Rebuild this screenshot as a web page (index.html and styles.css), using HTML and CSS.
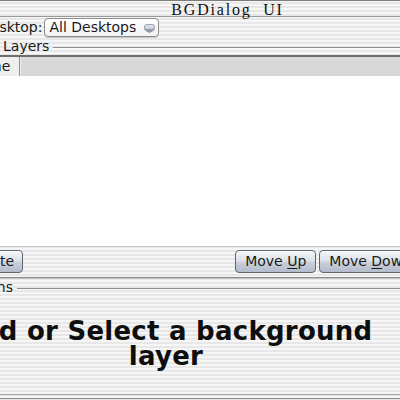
FILE: index.html
```html
<!DOCTYPE html>
<html>
<head>
<meta charset="utf-8">
<link rel="stylesheet" href="styles.css">
</head>
<body>
<div class="window">
  <div class="titlebar"><span class="title">BGDialog  UI</span></div>
  <div class="desk-row">
    <span class="label">Desktop:</span>
    <div class="popup">
      <span class="popup-text">All Desktops</span>
      <svg class="popup-arrow" width="11" height="9" viewBox="0 0 11 9">
        <defs>
          <linearGradient id="pg" x1="0" y1="0" x2="0" y2="1">
            <stop offset="0" stop-color="#e4e7ec"/>
            <stop offset="0.45" stop-color="#c9ced8"/>
            <stop offset="0.5" stop-color="#9ca5b6"/>
            <stop offset="1" stop-color="#8590a3"/>
          </linearGradient>
        </defs>
        <path d="M0.5 2.5 Q0.5 0.5 2.5 0.5 H8.5 Q10.5 0.5 10.5 2.5 V4.5 Q10.5 6 8.5 7 L5.5 8.5 L2.5 7 Q0.5 6 0.5 4.5 Z" fill="url(#pg)" stroke="#8a92a0" stroke-width="0.8"/>
        <path d="M1.5 4.2 H9.5" stroke="#eef0f4" stroke-width="0.8"/>
      </svg>
    </div>
  </div>
  <div class="group-row layers-row">
    <span class="group-label">Layers</span>
    <span class="group-line"></span>
  </div>
  <div class="list">
    <div class="list-header">
      <div class="col-cell">Name</div>
      <div class="col-rest"></div>
    </div>
    <div class="list-body"></div>
  </div>
  <div class="btn-row">
    <button class="btn btn-delete"><u>D</u>elete</button>
    <button class="btn btn-up">Move <u>U</u>p</button>
    <button class="btn btn-down">Move <u>D</u>own</button>
  </div>
  <div class="sep"></div>
  <div class="group-row options-row">
    <span class="group-label">Options</span>
    <span class="group-line"></span>
  </div>
  <div class="message">Add or Select a background layer</div>
  <div class="bottom-lines"></div>
</div>
</body>
</html>
```
FILE: styles.css
```css
html, body {
  margin: 0;
  padding: 0;
}
body {
  width: 400px;
  height: 400px;
  overflow: hidden;
  background: repeating-linear-gradient(to bottom, #f6f6f6 0px, #f6f6f6 2px, #e7e7e7 2px, #e7e7e7 4px);
  font-family: "DejaVu Sans", sans-serif;
  font-size: 14px;
  color: #1a1a1a;
}
.window {
  width: 575px;
  margin-left: -60px;
  border-top: 1px solid #7c7c7c;
}
.titlebar {
  height: 14px;
  padding-top: 1px;
  line-height: 16px;
  text-align: center;
  border-bottom: 1px solid #9a9a9a;
}
.title {
  font-family: "Liberation Serif", serif;
  font-size: 16px;
  letter-spacing: 1.8px;
  white-space: pre;
  color: #111;
}
.desk-row {
  display: flex;
  align-items: center;
  margin-top: 1px;
  padding-left: 40px;
  height: 19px;
}
.label {
  line-height: 17px;
}
.popup {
  margin-left: 2px;
  width: 113px;
  height: 17px;
  border: 1px solid #8c8c8c;
  border-radius: 4px;
  background: linear-gradient(#ffffff, #f3f3f3);
  box-shadow: 0 1px 0 #c8c8c8;
  display: flex;
  align-items: center;
  line-height: 17px;
}
.popup-text {
  padding-left: 4px;
  flex: 1;
}
.popup-arrow {
  margin-right: 3px;
  margin-top: 1px;
}
.group-row {
  display: flex;
  align-items: center;
  line-height: 17px;
}
.layers-row {
  margin-top: 1px;
  height: 17px;
  padding-left: 63px;
}
.options-row {
  height: 17px;
  padding-left: 19px;
}
.group-line {
  flex: 1;
  margin-left: 4px;
  margin-top: 2px;
  height: 1px;
  background: #8e8e8e;
  border-bottom: 1px solid #fafafa;
}
.list {
  border-top: 2px solid #6e6e6e;
  border-bottom: 1px solid #c9c9c9;
}
.list-header {
  display: flex;
  height: 19px;
  background: #d8d8d8;
  line-height: 19px;
}
.col-cell {
  width: 50px;
  padding-left: 29px;
  background: #efefef;
  border-right: 1px solid #8f8f8f;
  white-space: nowrap;
  overflow: hidden;
}
.col-rest {
  flex: 1;
  border-left: 1px solid #ececec;
}
.list-body {
  height: 170px;
  background: #ffffff;
}
.btn-row {
  display: flex;
  margin-top: 3px;
  padding-left: 19px;
  padding-right: 94px;
}
.btn {
  height: 23px;
  padding: 0 8px;
  border: 1px solid #5f6670;
  border-radius: 4px;
  background: linear-gradient(#f4f6f9 0%, #dde2ea 45%, #c9d0db 55%, #b3bccb 100%);
  box-shadow: inset 0 1px 0 #ffffff;
  font-family: "DejaVu Sans", sans-serif;
  font-size: 14px;
  line-height: 21px;
  color: #1a1a1a;
  white-space: nowrap;
}
.btn u {
  text-decoration-thickness: 1px;
  text-underline-offset: 2px;
}
.btn-up {
  margin-left: auto;
  padding: 0 9px;
}
.btn-down {
  margin-left: 3px;
  padding: 0 9px;
}
.sep {
  margin-top: 4px;
  height: 1px;
  background: #8a8a8a;
  border-bottom: 1px solid #c4c4c4;
}
.message {
  width: 440px;
  margin-left: 6px;
  margin-top: 23px;
  text-align: center;
  font-weight: bold;
  font-size: 26px;
  line-height: 25px;
  letter-spacing: 0.25px;
  color: #0e0e0e;
}
.bottom-lines {
  margin-top: 25px;
  height: 3px;
  border-top: 1px solid #a4a4a4;
  border-bottom: 1px solid #8a8a8a;
}
```
